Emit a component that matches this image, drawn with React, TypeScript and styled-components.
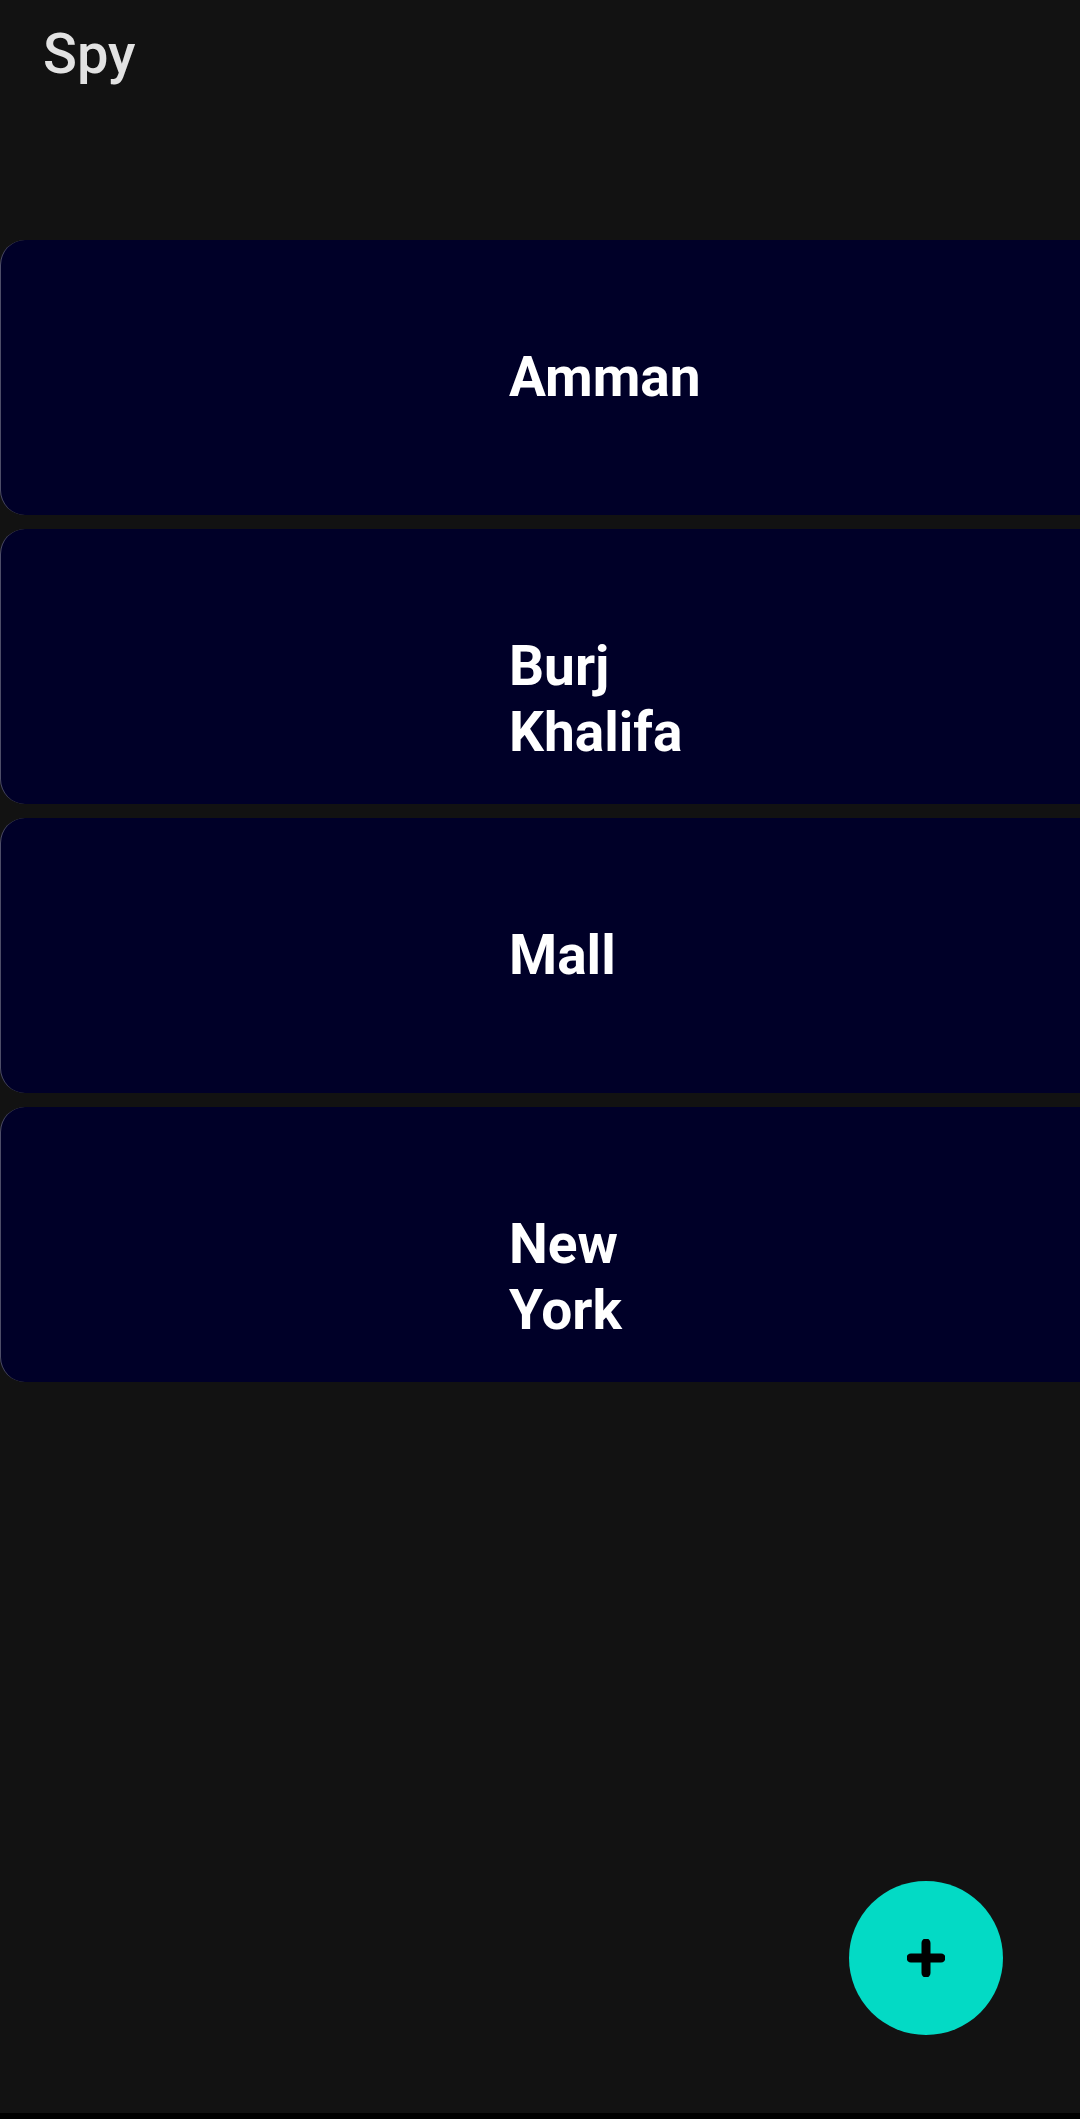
import React from "react";
import styled, { createGlobalStyle } from "styled-components";

const Global = createGlobalStyle`
  html, body { margin: 0; padding: 0; background: #000; overflow: hidden; }
  body { font-family: Roboto, "Noto Sans", sans-serif; }
`;

const Screen = styled.div`
  position: relative;
  width: 1080px;
  height: 2113px;
  background: #121212;
  display: flex;
  flex-direction: column;
  overflow: hidden;
`;

const Header = styled.header`
  height: 240px;
  padding-left: 43px;
  box-sizing: border-box;
`;

const Title = styled.h1`
  margin: 0;
  padding-top: 22px;
  font-family: Roboto, sans-serif;
  font-weight: 500;
  font-size: 56px;
  line-height: 64px;
  color: #e2e2e2;
`;

const List = styled.div`
  display: flex;
  flex-direction: column;
  gap: 14px;
`;

const Card = styled.div`
  width: 1140px;
  height: 275px;
  box-sizing: border-box;
  background: #000028;
  border-left: 1px solid rgba(255, 255, 255, 0.3);
  border-radius: 25px;
  display: flex;
  align-items: flex-start;
  padding: 104px 0 0 508px;
`;

const Place = styled.span`
  display: block;
  width: 205px;
  font-family: Roboto, sans-serif;
  font-weight: 700;
  font-size: 55px;
  line-height: 66px;
  color: #ffffff;
`;

const Fab = styled.button`
  position: absolute;
  right: 77px;
  bottom: 78px;
  width: 154px;
  height: 154px;
  border-radius: 50%;
  border: none;
  background: #03dac5;
  display: flex;
  align-items: center;
  justify-content: center;
  padding: 0;
  cursor: pointer;
`;

const places = ["Amman", "Burj Khalifa", "Mall", "New York"];

export default function App() {
  return (
    <>
      <Global />
      <Screen>
        <Header>
          <Title>Spy</Title>
        </Header>
        <List>
          {places.map((p) => (
            <Card key={p}>
              <Place>{p}</Place>
            </Card>
          ))}
        </List>
        <Fab aria-label="Add">
          <svg width="38" height="38" viewBox="0 0 38 38">
            <path d="M19 4v30M4 19h30" stroke="#000" strokeWidth="9" strokeLinecap="round" />
          </svg>
        </Fab>
      </Screen>
    </>
  );
}
